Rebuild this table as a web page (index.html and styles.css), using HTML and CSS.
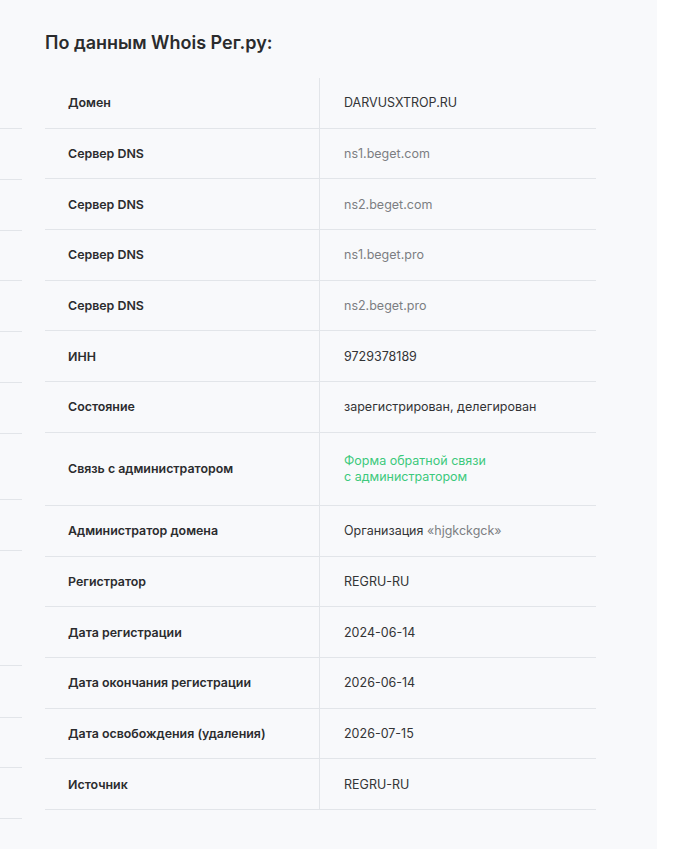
FILE: index.html
```html
<!DOCTYPE html>
<html lang="ru">
<head>
<meta charset="utf-8">
<title>Whois</title>
<link rel="stylesheet" href="styles.css">
</head>
<body>
<div class="page">
  <div class="side">
    <div class="sl h128"></div>
    <div class="sl h51"></div>
    <div class="sl h51"></div>
    <div class="sl h50"></div>
    <div class="sl h51"></div>
    <div class="sl h51"></div>
    <div class="sl h51"></div>
    <div class="sl h66"></div>
    <div class="sl h51"></div>
    <div class="sl h115"></div>
    <div class="sl h52"></div>
    <div class="sl h50"></div>
    <div class="sl h51"></div>
  </div>
  <main class="main">
    <h2 class="title">По данным Whois Рег.ру:</h2>
    <div class="table">
      <div class="row"><div class="k"><span>Домен</span></div><div class="v"><span>DARVUSXTROP.RU</span></div></div>
      <div class="row"><div class="k"><span>Сервер DNS</span></div><div class="v"><span class="muted">ns1.beget.com</span></div></div>
      <div class="row"><div class="k"><span>Сервер DNS</span></div><div class="v"><span class="muted">ns2.beget.com</span></div></div>
      <div class="row"><div class="k"><span>Сервер DNS</span></div><div class="v"><span class="muted">ns1.beget.pro</span></div></div>
      <div class="row"><div class="k"><span>Сервер DNS</span></div><div class="v"><span class="muted">ns2.beget.pro</span></div></div>
      <div class="row"><div class="k"><span>ИНН</span></div><div class="v"><span>9729378189</span></div></div>
      <div class="row"><div class="k"><span>Состояние</span></div><div class="v"><span>зарегистрирован, делегирован</span></div></div>
      <div class="row tall"><div class="k"><span>Связь с администратором</span></div><div class="v"><a class="link" href="#">Форма обратной связи<br>с администратором</a></div></div>
      <div class="row"><div class="k"><span>Администратор домена</span></div><div class="v"><span>Организация <span class="muted">«hjgkckgck»</span></span></div></div>
      <div class="row"><div class="k"><span>Регистратор</span></div><div class="v"><span>REGRU-RU</span></div></div>
      <div class="row"><div class="k"><span>Дата регистрации</span></div><div class="v"><span>2024-06-14</span></div></div>
      <div class="row"><div class="k"><span>Дата окончания регистрации</span></div><div class="v"><span>2026-06-14</span></div></div>
      <div class="row"><div class="k"><span>Дата освобождения (удаления)</span></div><div class="v"><span>2026-07-15</span></div></div>
      <div class="row"><div class="k"><span>Источник</span></div><div class="v"><span>REGRU-RU</span></div></div>
    </div>
  </main>
</div>
</body>
</html>
```
FILE: styles.css
```css
html, body {
  margin: 0;
  padding: 0;
  background: #ffffff;
}
.page {
  width: 657px;
  height: 849px;
  background: #f8f9fb;
  display: flex;
  align-items: flex-start;
  font-family: Inter, "Noto Sans", sans-serif;
}
.side {
  width: 22px;
  display: flex;
  flex-direction: column;
}
.sl {
  border-bottom: 1px solid #e2e5e9;
  box-sizing: border-box;
}
.h128 { height: 129px; }
.h115 { height: 115px; }
.h66 { height: 66px; }
.h52 { height: 52px; }
.h51 { height: 51px; }
.h50 { height: 50px; }
.main {
  margin-left: 23px;
  width: 551px;
  padding-top: 31px;
}
.title {
  margin: 0 0 23px;
  font-size: 18px;
  line-height: 24px;
  font-weight: 600;
  color: #2a2b2d;
  letter-spacing: 0;
}
.table {
  display: flex;
  flex-direction: column;
}
.row {
  display: grid;
  grid-template-columns: 275px 1fr;
  border-bottom: 1px solid #e2e5e9;
  height: 49.7px;
}
.row.tall {
  height: 72px;
}
.k {
  border-right: 1px solid #e2e5e9;
  padding-left: 23px;
  display: flex;
  align-items: center;
  font-size: 12.4px;
  font-weight: 600;
  color: #2b2c2e;
}
.v {
  padding-left: 24px;
  display: flex;
  align-items: center;
  font-size: 12.5px;
  font-weight: 400;
  color: #333436;
}
.muted {
  color: #7c7e82;
}
.link {
  color: #3cc97c;
  text-decoration: none;
  line-height: 16px;
}
```
